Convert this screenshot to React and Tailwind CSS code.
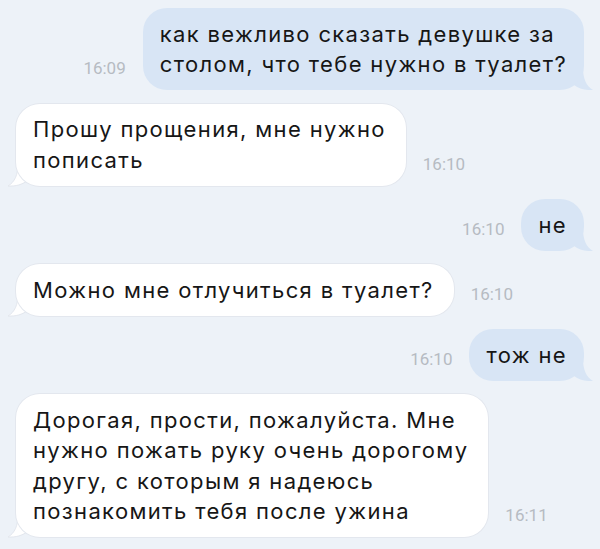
import React from "react";

const Tail = ({ side, color, line }) => {
    if (side === "right") {
        return (
            <svg className="absolute right-[-9px] bottom-0" width="20" height="22" viewBox="0 0 20 22">
                <path d="M0 0 H10 C10 10 13 18 20 22 C12 22.5 6 20.5 1 17 Z" fill={color} />
            </svg>
        );
    }
    return (
        <svg className="absolute left-[-8px] bottom-0 overflow-visible" width="20" height="22" viewBox="0 0 20 22">
            <path d="M20 0 H10 C10 10 7 18 0 22 C8 22.5 14 20.5 19 17 Z" fill={color} stroke={line} strokeWidth="1" />
        </svg>
    );
};

const Time = ({ children }) => (
    <div
        className="text-[17px] leading-[16px] text-[#b6bbc2] mb-[14px] whitespace-nowrap"
        style={{ fontFamily: "Roboto, sans-serif" }}
    >
        {children}
    </div>
);

const Out = ({ time, children }) => (
    <div className="flex justify-end items-end gap-[17px] pr-[16px]">
        <Time>{time}</Time>
        <div className="relative">
            <div className="relative z-10 bg-[#d8e5f5] rounded-[24px] px-[17px] py-[10.5px] leading-[30.5px] tracking-[1.35px] whitespace-nowrap">
                {children}
            </div>
            <Tail side="right" color="#d8e5f5" />
        </div>
    </div>
);

const In = ({ time, children }) => (
    <div className="flex justify-start items-end gap-[17px] pl-[16px]">
        <div className="relative">
            <div className="relative z-10 bg-white rounded-[24px] shadow-[0_0_0_1px_#e3e7ee] pl-[17px] pr-[20px] py-[10.5px] leading-[30.5px] tracking-[1.35px] whitespace-nowrap">
                {children}
            </div>
            <Tail side="left" color="#ffffff" line="#e3e7ee" />
        </div>
        <Time>{time}</Time>
    </div>
);

export default function App() {
    return (
        <div
            className="w-[600px] h-[549px] overflow-hidden bg-[#edf2f8] pt-[8px] flex flex-col gap-[13.5px] text-[22px] text-[#161616]"
            style={{ fontFamily: "Inter, Roboto, sans-serif" }}
        >
            <Out time="16:09">
                как вежливо сказать девушке за
                <br />
                столом, что тебе нужно в туалет?
            </Out>
            <In time="16:10">
                Прошу прощения, мне нужно
                <br />
                пописать
            </In>
            <Out time="16:10">не</Out>
            <In time="16:10">Можно мне отлучиться в туалет?</In>
            <Out time="16:10">тож не</Out>
            <In time="16:11">
                Дорогая, прости, пожалуйста. Мне
                <br />
                нужно пожать руку очень дорогому
                <br />
                другу, с которым я надеюсь
                <br />
                познакомить тебя после ужина
            </In>
        </div>
    );
}
